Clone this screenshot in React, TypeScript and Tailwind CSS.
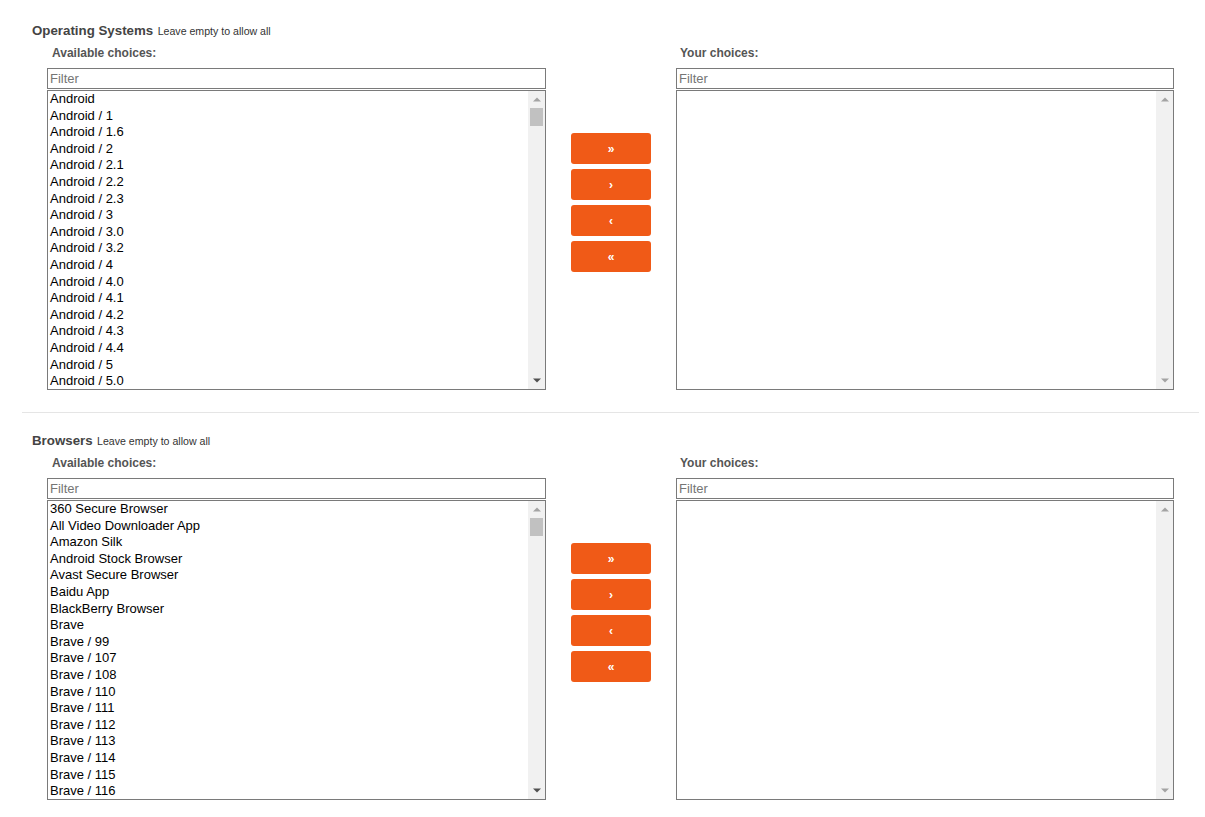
import React from 'react';

const osItems = [
  'Android', 'Android / 1', 'Android / 1.6', 'Android / 2', 'Android / 2.1', 'Android / 2.2',
  'Android / 2.3', 'Android / 3', 'Android / 3.0', 'Android / 3.2', 'Android / 4', 'Android / 4.0',
  'Android / 4.1', 'Android / 4.2', 'Android / 4.3', 'Android / 4.4', 'Android / 5', 'Android / 5.0',
];

const browserItems = [
  '360 Secure Browser', 'All Video Downloader App', 'Amazon Silk', 'Android Stock Browser',
  'Avast Secure Browser', 'Baidu App', 'BlackBerry Browser', 'Brave', 'Brave / 99', 'Brave / 107',
  'Brave / 108', 'Brave / 110', 'Brave / 111', 'Brave / 112', 'Brave / 113', 'Brave / 114',
  'Brave / 115', 'Brave / 116',
];

function Arrow({ up, dark }: { up?: boolean; dark?: boolean }) {
  return (
    <svg width="8" height="5" viewBox="0 0 8 5" className={up ? '' : 'rotate-180'}>
      <polygon points="0,4.5 4,0.5 8,4.5" fill={dark ? '#505050' : '#a3a3a3'} />
    </svg>
  );
}

function ListBox({ items }: { items: string[] }) {
  const scrollable = items.length > 0;
  return (
    <div className="flex h-[300px] border border-[#7a7a7a] bg-white">
      <ul className="flex-1 overflow-hidden pl-[2px] text-[13px] leading-[16.6px] text-black">
        {items.map((it) => (
          <li key={it} className="whitespace-nowrap">{it}</li>
        ))}
      </ul>
      <div className="flex w-[17px] flex-col items-center bg-[#f1f1f1]">
        <div className="flex h-[17px] items-center justify-center">
          <Arrow up />
        </div>
        {scrollable && <div className="h-[18px] w-[13px] bg-[#c1c1c1]" />}
        <div className="flex-1" />
        <div className="flex h-[17px] items-center justify-center">
          <Arrow dark={scrollable} />
        </div>
      </div>
    </div>
  );
}

function Column({ label, items, labelPad }: { label: string; items: string[]; labelPad: string }) {
  return (
    <div className="flex flex-col">
      <div className={`h-[16px] text-[12px] font-bold leading-[16px] text-[#555] ${labelPad}`}>{label}</div>
      <input
        placeholder="Filter"
        className="mt-[7px] h-[21px] border border-[#7a7a7a] px-[2px] text-[13px] text-black outline-none placeholder:text-[#757575]"
      />
      <div className="mt-px">
        <ListBox items={items} />
      </div>
    </div>
  );
}

function Selector({ title, items }: { title: string; items: string[] }) {
  return (
    <div className="py-[1px]">
      <div className="pl-[10px] leading-[16px] text-[#444]">
        <span className="text-[13.3px] font-bold">{title}</span>{' '}
        <span className="text-[10.6px] text-[#333]">Leave empty to allow all</span>
      </div>
      <div className="mt-[6px] flex gap-[25px] pl-[25px]">
        <div className="w-[499px]">
          <Column label="Available choices:" items={items} labelPad="pl-[5px]" />
        </div>
        <div className="flex w-[80px] flex-col gap-[5px] pt-[88px]">
          {['»', '›', '‹', '«'].map((g) => (
            <button
              key={g}
              className="h-[31px] rounded-[3px] bg-[#f05a17] text-[12px] font-bold leading-none text-white"
            >
              {g}
            </button>
          ))}
        </div>
        <div className="w-[498px]">
          <Column label="Your choices:" items={[]} labelPad="pl-[4px]" />
        </div>
      </div>
    </div>
  );
}

export default function App() {
  return (
    <div className="min-h-[817px] bg-white pt-[21px] font-['Liberation_Sans',Arial,sans-serif]">
      <div className="ml-[22px] w-[1177px]">
        <Selector title="Operating Systems" items={osItems} />
        <div className="mt-[21px] mb-[18px] h-px bg-[#e5e5e5]" />
        <Selector title="Browsers" items={browserItems} />
      </div>
    </div>
  );
}
